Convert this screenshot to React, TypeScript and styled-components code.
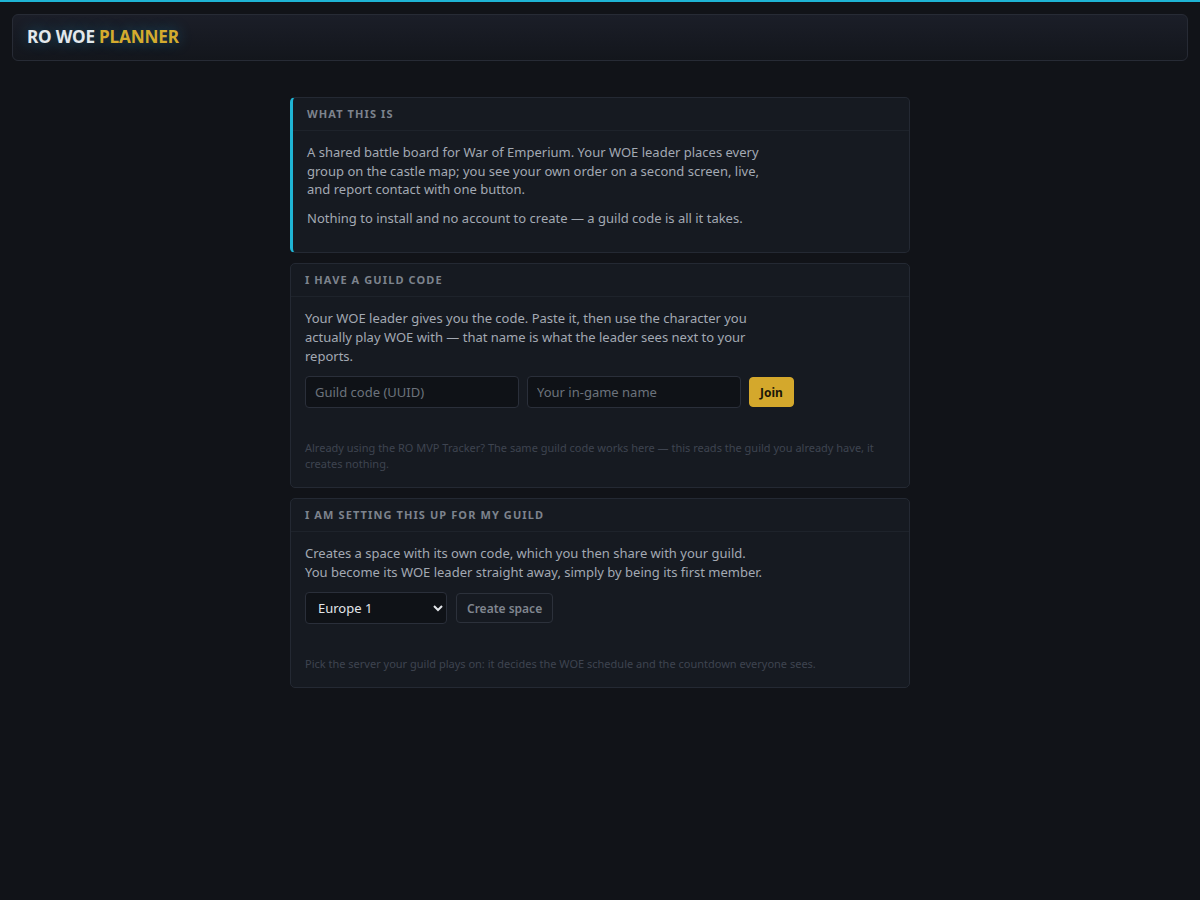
import React from "react";
import styled, { createGlobalStyle } from "styled-components";

const Global = createGlobalStyle`
  html, body { margin: 0; padding: 0; background: #111318; }
  body {
    font-family: "Noto Sans", "DejaVu Sans", sans-serif;
    color: #a3a9b3;
    min-height: 100vh;
    border-top: 2px solid #1fb4d4;
    box-sizing: border-box;
  }
  * { box-sizing: border-box; }
`;

const Page = styled.div`
  padding: 12px 12px 40px;
`;

const TopBar = styled.header`
  height: 47px;
  border: 1px solid #272b35;
  border-radius: 6px;
  background: linear-gradient(180deg, #1b1e28 0%, #13161c 100%);
  display: flex;
  align-items: center;
  padding: 0 14px 2px;
`;

const Brand = styled.h1`
  margin: 0;
  font-size: 17.2px;
  font-weight: 700;
  color: #e3e8ec;
  letter-spacing: -0.2px;
  text-shadow: 0 0 14px rgba(31, 150, 200, 0.45);
`;

const Accent = styled.span`
  color: #d4ab2e;
`;

const Column = styled.main`
  width: 620px;
  margin: 36px auto 0;
  display: flex;
  flex-direction: column;
  gap: 10px;
`;

const Card = styled.section<{ $accent?: boolean }>`
  background: #161a21;
  border: 1px solid #242933;
  border-left: ${(p) => (p.$accent ? "3px solid #1fb4d4" : "1px solid #242933")};
  border-radius: 5px;
`;

const CardHead = styled.div`
  height: 33px;
  display: flex;
  align-items: center;
  padding: 0 14px 1px;
  border-bottom: 1px solid #1e232b;
  font-size: 11px;
  font-weight: 700;
  letter-spacing: 1.1px;
  text-transform: uppercase;
  color: #7d838d;
`;

const CardBody = styled.div`
  padding: 12px 14px 15px;
`;

const Para = styled.p<{ $last?: boolean }>`
  margin: 0 0 ${(p) => (p.$last ? "0" : "10px")};
  max-width: 460px;
  font-size: 13px;
  line-height: 18.6px;
  color: #a3a9b3;
`;

const Row = styled.div`
  display: flex;
  align-items: center;
  gap: 8px;
  margin-top: 11px;
`;

const Input = styled.input`
  width: 214px;
  height: 32px;
  background: #0f1217;
  border: 1px solid #2a2f3a;
  border-radius: 4px;
  padding: 0 9px;
  font-family: inherit;
  font-size: 13px;
  color: #d7dbe0;
  &::placeholder { color: #6c727c; }
  outline: none;
`;

const Select = styled.select`
  width: 142px;
  height: 32px;
  background: #0f1217;
  border: 1px solid #2a2f3a;
  border-radius: 4px;
  padding: 0 8px;
  font-family: inherit;
  font-size: 13px;
  color: #e3e6ea;
  color-scheme: dark;
`;

const Button = styled.button<{ $primary?: boolean }>`
  height: 30px;
  padding: 0 10px;
  border-radius: 4px;
  font-family: inherit;
  font-size: 12px;
  font-weight: ${(p) => (p.$primary ? 700 : 600)};
  cursor: pointer;
  background: ${(p) => (p.$primary ? "#d4a82c" : "transparent")};
  color: ${(p) => (p.$primary ? "#1a1608" : "#80868f")};
  border: 1px solid ${(p) => (p.$primary ? "#d4a82c" : "#2c313b")};
  margin-left: ${(p) => (p.$primary ? "0" : "1px")};
`;

const Note = styled.p`
  margin: 32px 0 0;
  font-size: 11px;
  line-height: 16px;
  color: #3e4450;
`;

export default function App() {
  return (
    <>
      <Global />
      <Page>
        <TopBar>
          <Brand>
            RO WOE <Accent>PLANNER</Accent>
          </Brand>
        </TopBar>
        <Column>
          <Card $accent>
            <CardHead>What this is</CardHead>
            <CardBody>
              <Para>
                A shared battle board for War of Emperium. Your WOE leader places every group on the
                castle map; you see your own order on a second screen, live, and report contact with
                one button.
              </Para>
              <Para>Nothing to install and no account to create — a guild code is all it takes.</Para>
            </CardBody>
          </Card>
          <Card>
            <CardHead>I have a guild code</CardHead>
            <CardBody>
              <Para $last>
                Your WOE leader gives you the code. Paste it, then use the character you actually play
                WOE with — that name is what the leader sees next to your reports.
              </Para>
              <Row>
                <Input placeholder="Guild code (UUID)" />
                <Input placeholder="Your in-game name" />
                <Button $primary>Join</Button>
              </Row>
              <Note>
                Already using the RO MVP Tracker? The same guild code works here — this reads the guild
                you already have, it creates nothing.
              </Note>
            </CardBody>
          </Card>
          <Card>
            <CardHead>I am setting this up for my guild</CardHead>
            <CardBody>
              <Para $last>
                Creates a space with its own code, which you then share with your guild. You become its
                WOE leader straight away, simply by being its first member.
              </Para>
              <Row>
                <Select defaultValue="eu1">
                  <option value="eu1">Europe 1</option>
                  <option value="eu2">Europe 2</option>
                  <option value="na">North America</option>
                </Select>
                <Button>Create space</Button>
              </Row>
              <Note>
                Pick the server your guild plays on: it decides the WOE schedule and the countdown
                everyone sees.
              </Note>
            </CardBody>
          </Card>
        </Column>
      </Page>
    </>
  );
}
